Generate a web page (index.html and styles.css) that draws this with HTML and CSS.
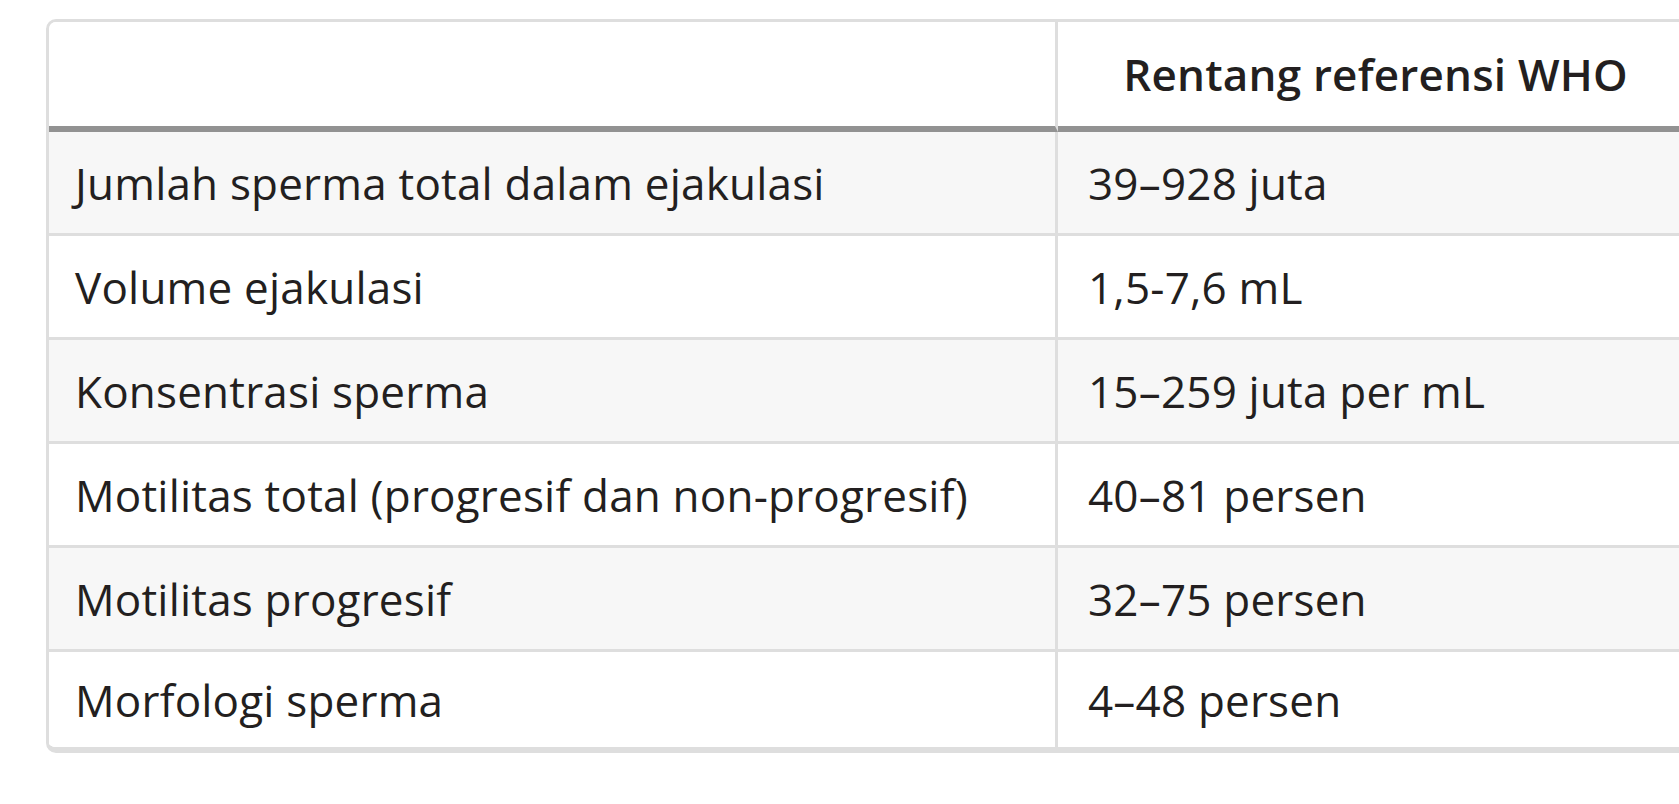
FILE: index.html
```html
<!DOCTYPE html>
<html lang="id">
<head>
<meta charset="utf-8">
<title>Rentang referensi WHO</title>
<link rel="stylesheet" href="styles.css">
</head>
<body>
<div class="page">
  <table class="ref-table">
    <thead>
      <tr>
        <th class="col-param"></th>
        <th class="col-range">Rentang referensi WHO</th>
      </tr>
    </thead>
    <tbody>
      <tr class="odd"><td class="col-param">Jumlah sperma total dalam ejakulasi</td><td class="col-range">39–928 juta</td></tr>
      <tr><td class="col-param">Volume ejakulasi</td><td class="col-range">1,5-7,6 mL</td></tr>
      <tr class="odd"><td class="col-param">Konsentrasi sperma</td><td class="col-range">15–259 juta per mL</td></tr>
      <tr><td class="col-param">Motilitas total (progresif dan non-progresif)</td><td class="col-range">40–81 persen</td></tr>
      <tr class="odd"><td class="col-param">Motilitas progresif</td><td class="col-range">32–75 persen</td></tr>
      <tr class="last"><td class="col-param">Morfologi sperma</td><td class="col-range">4–48 persen</td></tr>
    </tbody>
  </table>
</div>
</body>
</html>
```

FILE: styles.css
```css
html, body {
  margin: 0;
  padding: 0;
  background: #ffffff;
  overflow: hidden;
}

.page {
  padding: 19px 0 0 46px;
  width: 1700px;
}

.ref-table {
  width: 1650px;
  border-collapse: separate;
  border-spacing: 0;
  border: 3px solid #dedede;
  border-bottom-width: 6px;
  border-radius: 10px;
  overflow: hidden;
  font-family: "Open Sans", Lato, sans-serif;
  font-size: 44px;
  letter-spacing: 0.2px;
  color: #231f20;
  table-layout: fixed;
}

.ref-table th,
.ref-table td {
  box-sizing: border-box;
  padding: 0 28px;
  text-align: left;
  vertical-align: middle;
  white-space: nowrap;
}

.ref-table th {
  height: 110px;
  border-bottom: 6px solid #929292;
  font-weight: 600;
  text-align: center;
  background: #ffffff;
}

.ref-table td {
  height: 104px;
  border-bottom: 3px solid #dedede;
  font-weight: 400;
  background: #ffffff;
}

.ref-table .col-param {
  width: 1009px;
  padding-left: 26px;
  border-right: 3px solid #dedede;
}

.ref-table .col-range {
  padding-left: 30px;
}

.ref-table th.col-range {
  padding-left: 28px;
}

.ref-table tr.odd td {
  background: #f7f7f7;
}

.ref-table tr.last td {
  height: 95px;
  border-bottom: none;
}
```
